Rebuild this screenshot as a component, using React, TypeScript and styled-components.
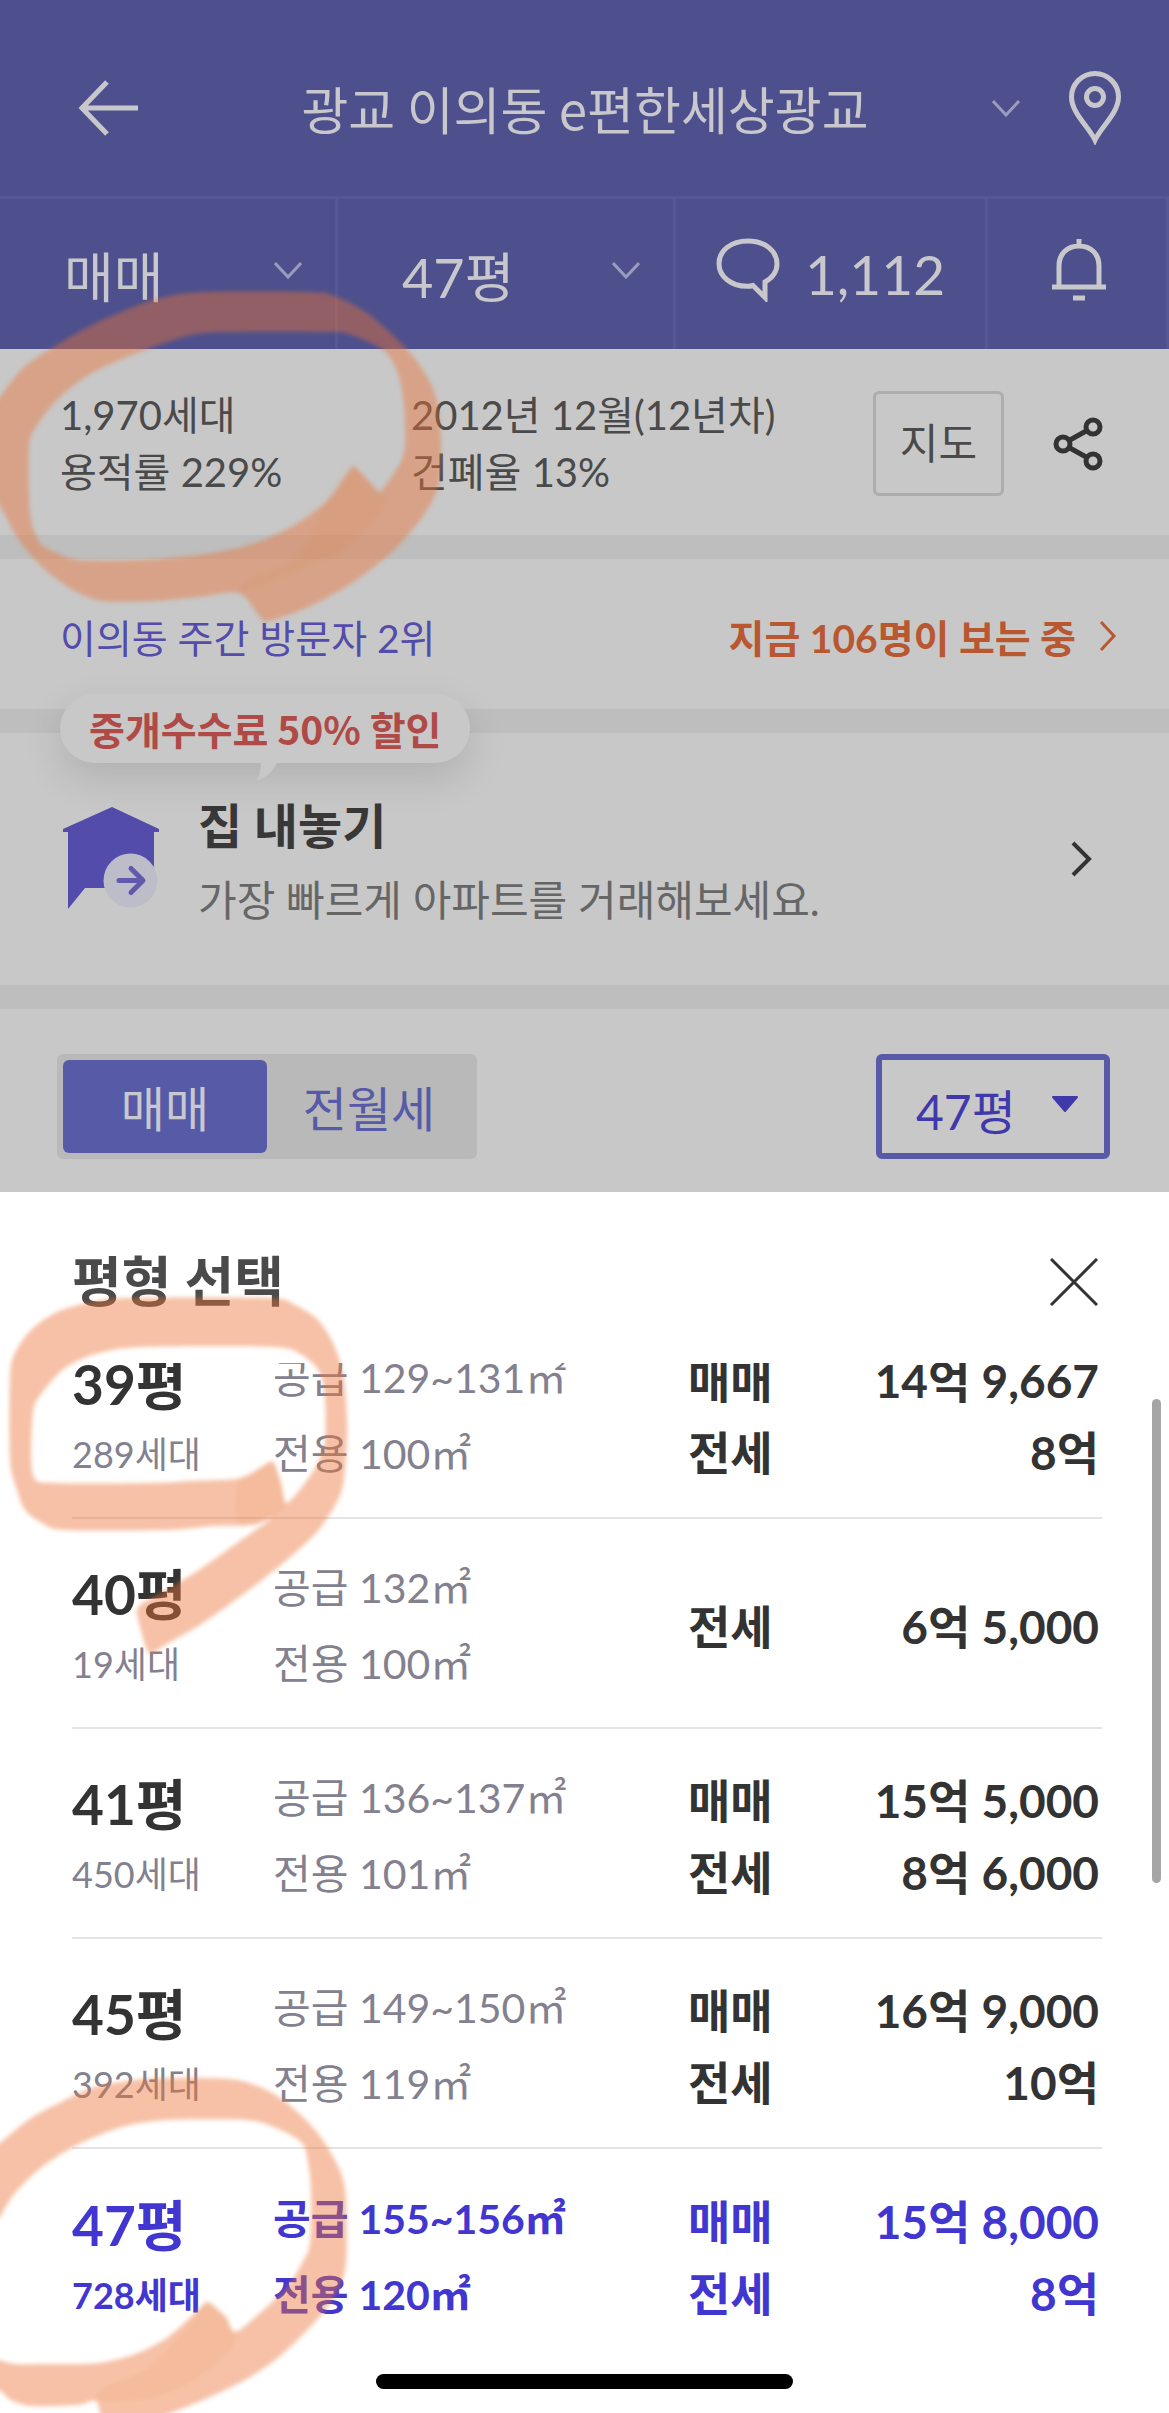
import React from "react";
import styled, { createGlobalStyle } from "styled-components";

const color = {
  header: "#4d508d",
  headerLine: "#555893",
  headerText: "#c8c8cc",
  page: "#c8c8c8",
  band: "#bebebe",
  ink: "#333333",
  body: "#4a4a4a",
  muted: "#666666",
  indigo: "#534caa",
  violet: "#575ba7",
  accent: "#4137d0",
  cool: "#83818f",
};

const GlobalStyle = createGlobalStyle`
  * { box-sizing: border-box; }
  body {
    margin: 0;
    background: #ffffff;
    font-family: Lato, "Noto Sans CJK KR", sans-serif;
    color: ${color.body};
  }
  button, select {
    margin: 0;
    padding: 0;
    border: 0;
    background: none;
    font: inherit;
    color: inherit;
    text-align: left;
    cursor: pointer;
  }
  select { appearance: none; outline: none; }
  svg { display: block; flex: none; }
  h1, h2, p, ul { margin: 0; padding: 0; }
  ul { list-style: none; }
`;

const Page = styled.div`
  position: relative;
  display: flex;
  flex-direction: column;
  min-height: 100vh;
  overflow: hidden;
`;

/* Header */

const Header = styled.header`
  background: ${color.header};
  color: ${color.headerText};
`;

const TitleBar = styled.div`
  display: grid;
  grid-template-columns: 138px 1fr 28px 101px;
  align-items: center;
  height: 199px;
  padding: 20px 48px 0 0;
  border-bottom: 3px solid ${color.headerLine};
`;

const IconButton = styled.button`
  display: flex;
  align-items: center;
  justify-content: flex-end;
`;

const Title = styled.h1`
  padding-left: 40px;
  font-family: "Noto Sans CJK KR", sans-serif;
  font-size: 51px;
  font-weight: 400;
  line-height: 60px;
  text-align: center;
`;

const Filters = styled.div`
  display: grid;
  grid-template-columns: 338fr 338fr 312fr 181fr;
  height: 150px;
`;

const FilterCell = styled.div`
  display: flex;
  align-items: center;
  padding: 0 33px 8px 64px;
  border-right: 3px solid ${color.headerLine};
  font-size: 54px;
`;

const FilterSelect = styled.select`
  flex: 1;
  min-width: 0;
  height: 93px;
  padding-top: 14px;
`;

const TalkButton = styled.button`
  display: flex;
  align-items: center;
  justify-content: center;
  gap: 25px;
  padding-bottom: 8px;
  border-right: 3px solid ${color.headerLine};
  font-size: 55px;

  span {
    padding-top: 8px;
  }
`;

const BellButton = styled.button`
  display: flex;
  align-items: center;
  justify-content: center;
  padding: 0 0 8px 4px;
  border-right: 3px solid ${color.headerLine};
`;

/* Complex summary */

const Band = styled.div`
  height: 24px;
  background: ${color.band};
`;

const Section = styled.section<{ $height: number; $top?: number }>`
  position: relative;
  display: flex;
  align-items: center;
  min-height: ${(p) => p.$height}px;
  padding: ${(p) => p.$top ?? 0}px 66px 0 60px;
  background: ${color.page};
`;

const Facts = styled.p<{ $grow?: boolean }>`
  flex: ${(p) => (p.$grow ? "1" : "0 0 351px")};
  font-size: 40px;
  line-height: 57px;
`;

const MapButton = styled.button`
  width: 131px;
  height: 105px;
  padding-bottom: 6px;
  border: 3px solid #adadad;
  border-radius: 6px;
  font-size: 42px;
  text-align: center;
`;

const ShareButton = styled.button`
  margin-left: 49px;
`;

const Rank = styled.p`
  flex: 1;
  font-size: 39px;
  color: ${color.indigo};
`;

const ViewersLink = styled.a`
  display: flex;
  align-items: center;
  gap: 23px;
  margin-right: -14px;
  font-size: 39px;
  font-weight: 700;
  color: #b85730;
  text-decoration: none;
`;

/* Sell banner */

const Promo = styled.div`
  position: absolute;
  left: 60px;
  top: -39px;
  height: 69px;
  padding: 0 29px;
  border-radius: 35px;
  background: ${color.page};
  box-shadow: 0 15px 40px rgba(0, 0, 0, 0.12);
  font-family: "Noto Sans CJK KR", sans-serif;
  font-size: 39px;
  font-weight: 700;
  line-height: 69px;
  color: #af4a47;

  svg {
    position: absolute;
    left: 196px;
    top: 68px;
  }
`;

const SellLink = styled.a`
  flex: 1;
  display: flex;
  align-items: center;
  padding: 0 11px 0 3px;
  color: inherit;
  text-decoration: none;
`;

const SellText = styled.span`
  flex: 1;
  display: flex;
  flex-direction: column;
  padding: 8px 0 0 38px;
`;

const SellTitle = styled.strong`
  font-size: 48px;
  font-weight: 700;
  line-height: 74px;
  color: #383838;
`;

const SellNote = styled.span`
  font-size: 42px;
  line-height: 74px;
  color: ${color.muted};
`;

/* Trade toggle */

const Toggle = styled.div`
  display: grid;
  grid-template-columns: 204px 204px;
  height: 105px;
  margin-left: -3px;
  padding: 6px;
  border-radius: 6px;
  background: #b9b9b9;
`;

const ToggleButton = styled.button<{ $active?: boolean }>`
  border-radius: 6px;
  padding-bottom: 2px;
  background: ${(p) => (p.$active ? color.violet : "transparent")};
  color: ${(p) => (p.$active ? "#c8c8d0" : color.violet)};
  font-size: 48px;
  text-align: center;
`;

const SizeBox = styled.div`
  display: flex;
  align-items: center;
  width: 234px;
  height: 105px;
  margin-left: auto;
  margin-right: -7px;
  padding: 0 25px 4px 34px;
  border: 6px solid ${color.violet};
  border-radius: 6px;
  color: #4039ab;
  font-size: 48px;
`;

/* Bottom sheet */

const Sheet = styled.section`
  position: relative;
  background: #ffffff;
`;

const SheetHead = styled.div`
  display: flex;
  align-items: center;
  justify-content: space-between;
  height: 171px;
  padding: 8px 71px 0 72px;
`;

const SheetTitle = styled.h2`
  font-size: 54px;
  font-weight: 700;
  line-height: 80px;
`;

const ListViewport = styled.div`
  overflow: hidden;
  padding: 0 67px 0 72px;
`;

const List = styled.ul`
  margin-top: -54px;
`;

const Item = styled.li`
  height: 210px;
  border-bottom: 2px solid #e4e4e6;

  &:last-child {
    height: 209px;
    border-bottom: 0;
  }
`;

const RowButton = styled.button<{ $selected?: boolean }>`
  display: grid;
  grid-template-columns: 201px 1fr 124px 290px;
  align-items: center;
  width: 100%;
  height: 100%;
  color: ${(p) => (p.$selected ? color.accent : color.ink)};
`;

const Column = styled.span<{ $top: number; $end?: boolean }>`
  display: flex;
  flex-direction: column;
  align-items: ${(p) => (p.$end ? "flex-end" : "flex-start")};
  padding-top: ${(p) => p.$top}px;
  white-space: nowrap;
`;

const Pyeong = styled.strong`
  font-size: 55px;
  font-weight: 700;
  line-height: 70px;
`;

const Detail = styled.span<{ $selected?: boolean; $small?: boolean }>`
  font-size: ${(p) => (p.$small ? 36 : 41)}px;
  font-weight: ${(p) => (p.$selected ? 700 : 400)};
  line-height: ${(p) => (p.$small ? 70 : 76)}px;
  color: ${(p) => (p.$selected ? color.accent : color.cool)};
`;

const Price = styled.span`
  padding-right: 3px;
  font-size: 46px;
  font-weight: 700;
  line-height: 72px;
`;

const ScrollThumb = styled.div`
  position: absolute;
  top: 207px;
  right: 8px;
  width: 9px;
  height: 484px;
  border-radius: 5px;
  background: #a5a5a5;
`;

const HomeArea = styled.footer`
  display: flex;
  justify-content: center;
  padding: 16px 0 24px;
  background: #ffffff;
`;

const HomeBar = styled.div`
  width: 417px;
  height: 15px;
  border-radius: 8px;
  background: #000000;
`;

const Marker = styled.svg`
  position: absolute;
  left: 0;
  top: 0;
  width: 1169px;
  height: 2413px;
  pointer-events: none;
`;

/* Icons */

const ChevronDown = () => (
  <svg width="28" height="18" viewBox="0 0 28 18" fill="none" stroke="#9b9cbb" strokeWidth="3">
    <path d="M1 2l13 14L27 2" />
  </svg>
);

const BackIcon = () => (
  <svg width="60" height="56" viewBox="0 0 60 56" fill="none" stroke={color.headerText} strokeWidth="5">
    <path d="M29 2L4 28l25 26M4 28h56" />
  </svg>
);

const PinIcon = () => (
  <svg width="52" height="74" viewBox="0 0 52 74" fill="none" stroke={color.headerText} strokeWidth="5">
    <path d="M26 69C20 56 2.500 42 2.500 26a23.500 23.500 0 0 1 47 0C49.500 42 32 56 26 69z" />
    <circle cx="26" cy="26" r="8.500" />
  </svg>
);

const TalkIcon = () => (
  <svg width="64" height="64" viewBox="0 0 64 64" fill="none" stroke={color.headerText} strokeWidth="5">
    <path d="M49 59.500L37 47.500c-2 .6-4 .8-6 .8C15 48.300 3 38.500 3 25.500S15 3 32 3s29 10 29 23c0 8-5 14-12 18z" />
  </svg>
);

const BellIcon = () => (
  <svg width="54" height="62" viewBox="0 0 54 62" fill="none" stroke={color.headerText} strokeWidth="5">
    <path d="M0 48h54M7 48V27C7 15 15 7 27 7s20 8 20 20v21M27 0v7M21 59h12" />
  </svg>
);

const ShareIcon = () => (
  <svg width="50" height="54" viewBox="0 0 50 54" fill="none" stroke="#333" strokeWidth="5">
    <circle cx="10" cy="27" r="7" />
    <circle cx="40" cy="10" r="7" />
    <circle cx="40" cy="44" r="7" />
    <path d="M16 23.500l18-10M16 30.500l18 10" />
  </svg>
);

const ChevronRight = ({ w, h, stroke, line }: { w: number; h: number; stroke: string; line: number }) => (
  <svg width={w} height={h} viewBox={`0 0 ${w} ${h}`} fill="none" stroke={stroke} strokeWidth={line}>
    <path d={`M2 2L${w - 3} ${h / 2}L2 ${h - 2}`} />
  </svg>
);

const HouseIcon = () => (
  <svg width="97" height="104" viewBox="0 0 97 104">
    <path d="M49 0L96 22v3h-5v56H22L5 102V25H0v-3z" fill={color.indigo} />
    <circle cx="67.500" cy="73.500" r="27" fill="#bdbdc9" />
    <path d="M56 73.500h23M68 61.500l12 12-12 12" fill="none" stroke="#6159ad" strokeWidth="5" strokeLinecap="round" strokeLinejoin="round" />
  </svg>
);

const CloseIcon = () => (
  <svg width="48" height="48" viewBox="0 0 48 48" fill="none" stroke="#333" strokeWidth="3">
    <path d="M1 1l46 46M47 1L1 47" />
  </svg>
);

/* Highlighter strokes: each outline is a list of points joined by a smooth closed curve. */

type Pt = [number, number];

const smooth = (pts: Pt[]) => {
  const n = pts.length;
  const at = (i: number) => pts[(i + n) % n];
  let d = `M${pts[0][0]} ${pts[0][1]}`;
  for (let i = 0; i < n; i++) {
    const [p0, p1, p2, p3] = [at(i - 1), at(i), at(i + 1), at(i + 2)];
    d += `C${p1[0] + (p2[0] - p0[0]) / 7} ${p1[1] + (p2[1] - p0[1]) / 7} ${p2[0] - (p3[0] - p1[0]) / 7} ${
      p2[1] - (p3[1] - p1[1]) / 7
    } ${p2[0]} ${p2[1]}`;
  }
  return d + "Z";
};

const rings: { outer: Pt[]; inner: Pt[]; nib: Pt[] }[] = [
  {
    outer: [
      [-12, 415], [0, 397], [23, 368], [52, 348], [88, 327], [126, 310], [161, 298], [203, 292], [310, 292], [337, 297],
      [367, 313], [398, 340], [421, 367], [436, 397], [441, 440], [439, 483], [425, 513], [394, 550], [352, 583],
      [306, 608], [268, 621], [260, 617], [239, 593], [199, 597], [153, 601], [103, 601], [73, 590], [42, 567],
      [19, 540], [4, 513], [-12, 480],
    ],
    inner: [
      [29, 447], [34, 430], [57, 400], [92, 373], [145, 350], [191, 335], [230, 332], [329, 332], [352, 335],
      [383, 350], [398, 373], [404, 407], [405, 447], [398, 467], [382, 490], [379, 492], [356, 468], [352, 467],
      [343, 480], [325, 503], [291, 527], [249, 545], [199, 555], [138, 560], [80, 560], [57, 553], [40, 543],
      [31, 520], [29, 493],
    ],
    nib: [
      [352, 467], [383, 495], [384, 505], [367, 527], [337, 553], [291, 573], [239, 593], [250, 580], [300, 555],
      [325, 503],
    ],
  },
  {
    outer: [
      [10, 1377], [15, 1353], [31, 1330], [57, 1312], [92, 1302], [130, 1298], [268, 1298], [295, 1305], [318, 1320],
      [333, 1343], [343, 1373], [347, 1417], [346, 1457], [341, 1493], [321, 1527], [295, 1553], [253, 1587],
      [203, 1623], [165, 1645], [153, 1653], [147, 1650], [140, 1627], [137, 1613], [140, 1605], [161, 1593],
      [199, 1570], [237, 1543], [272, 1518], [253, 1525], [214, 1526], [165, 1530], [65, 1530], [42, 1523],
      [25, 1510], [17, 1490], [10, 1460],
    ],
    inner: [
      [33, 1413], [42, 1393], [65, 1368], [99, 1353], [145, 1347], [272, 1347], [302, 1355], [320, 1373], [325, 1400],
      [325, 1440], [318, 1463], [302, 1487], [286, 1503], [281, 1483], [274, 1463], [268, 1463], [241, 1478],
      [191, 1481], [153, 1483], [57, 1483], [33, 1475],
    ],
    nib: [[241, 1478], [268, 1464], [274, 1464], [281, 1483], [286, 1503], [272, 1518], [240, 1524], [236, 1500]],
  },
  {
    outer: [
      [-12, 2155], [0, 2143], [31, 2118], [61, 2102], [92, 2088], [134, 2080], [172, 2078], [230, 2079], [260, 2087],
      [283, 2100], [306, 2120], [325, 2143], [341, 2173], [346, 2200], [346, 2263], [337, 2293], [314, 2323],
      [279, 2357], [245, 2380], [203, 2400], [168, 2414], [150, 2422], [106, 2422], [96, 2401], [77, 2405], [31, 2406],
      [11, 2400], [0, 2390], [-12, 2378],
    ],
    inner: [
      [-14, 2240], [0, 2217], [15, 2193], [42, 2167], [77, 2145], [122, 2127], [168, 2120], [245, 2120], [276, 2128],
      [302, 2143], [308, 2163], [311, 2190], [310, 2243], [302, 2263], [287, 2287], [260, 2313], [235, 2332],
      [226, 2317], [210, 2303], [205, 2303], [195, 2313], [168, 2337], [138, 2353], [99, 2363], [46, 2364],
      [15, 2364], [0, 2360], [-14, 2352],
    ],
    nib: [
      [205, 2304], [210, 2304], [236, 2334], [220, 2358], [190, 2382], [150, 2398], [96, 2401], [110, 2385],
      [150, 2368], [185, 2330],
    ],
  },
];

const MarkerLayer = () => (
  <Marker viewBox="0 0 1169 2413" aria-hidden="true">
    <defs>
      <filter id="soft" x="-5%" y="-5%" width="110%" height="110%">
        <feGaussianBlur stdDeviation="2" />
      </filter>
    </defs>
    <g fill="#eb7132" filter="url(#soft)">
      {rings.map((ring, i) => (
        <g key={i}>
          <path d={smooth(ring.outer) + smooth(ring.inner)} fillRule="evenodd" fillOpacity="0.44" />
          <path d={smooth(ring.nib)} fillOpacity="0.08" />
        </g>
      ))}
    </g>
  </Marker>
);

/* Data */

const sizes = [
  { name: "39평", homes: "289세대", supply: "129~131㎡", net: "100㎡", prices: [["매매", "14억 9,667"], ["전세", "8억"]] },
  { name: "40평", homes: "19세대", supply: "132㎡", net: "100㎡", prices: [["전세", "6억 5,000"]] },
  { name: "41평", homes: "450세대", supply: "136~137㎡", net: "101㎡", prices: [["매매", "15억 5,000"], ["전세", "8억 6,000"]] },
  { name: "45평", homes: "392세대", supply: "149~150㎡", net: "119㎡", prices: [["매매", "16억 9,000"], ["전세", "10억"]] },
  { name: "47평", homes: "728세대", supply: "155~156㎡", net: "120㎡", prices: [["매매", "15억 8,000"], ["전세", "8억"]] },
];

export default function App() {
  return (
    <Page>
      <GlobalStyle />
      <Header>
        <TitleBar>
          <IconButton aria-label="뒤로">
            <BackIcon />
          </IconButton>
          <Title>광교 이의동 e편한세상광교</Title>
          <IconButton aria-label="단지 변경">
            <ChevronDown />
          </IconButton>
          <IconButton aria-label="위치">
            <PinIcon />
          </IconButton>
        </TitleBar>
        <Filters>
          <FilterCell>
            <FilterSelect aria-label="거래 유형">
              <option>매매</option>
            </FilterSelect>
            <ChevronDown />
          </FilterCell>
          <FilterCell>
            <FilterSelect aria-label="평형">
              <option>47평</option>
            </FilterSelect>
            <ChevronDown />
          </FilterCell>
          <TalkButton>
            <TalkIcon />
            <span>1,112</span>
          </TalkButton>
          <BellButton aria-label="알림">
            <BellIcon />
          </BellButton>
        </Filters>
      </Header>

      <Section $height={186} $top={3}>
        <Facts>
          1,970세대
          <br />
          용적률 229%
        </Facts>
        <Facts $grow>
          2012년 12월(12년차)
          <br />
          건폐율 13%
        </Facts>
        <MapButton>지도</MapButton>
        <ShareButton aria-label="공유">
          <ShareIcon />
        </ShareButton>
      </Section>
      <Band />

      <Section $height={150} $top={3}>
        <Rank>이의동 주간 방문자 2위</Rank>
        <ViewersLink href="#viewers">
          지금 106명이 보는 중
          <ChevronRight w={18} h={32} stroke="#b85730" line={3} />
        </ViewersLink>
      </Section>
      <Band />

      <Section $height={252}>
        <Promo>
          중개수수료 50% 할인
          <svg width="21" height="19" viewBox="0 0 21 19">
            <path d="M5 0h16C18 9 10 16 0 19 4 13 5 7 5 0z" fill={color.page} />
          </svg>
        </Promo>
        <SellLink href="#sell">
          <HouseIcon />
          <SellText>
            <SellTitle>집 내놓기</SellTitle>
            <SellNote>가장 빠르게 아파트를 거래해보세요.</SellNote>
          </SellText>
          <ChevronRight w={21} h={36} stroke="#333" line={4} />
        </SellLink>
      </Section>
      <Band />

      <Section $height={183} $top={12}>
        <Toggle>
          <ToggleButton $active>매매</ToggleButton>
          <ToggleButton>전월세</ToggleButton>
        </Toggle>
        <SizeBox>
          <FilterSelect aria-label="평형 필터">
            <option>47평</option>
          </FilterSelect>
          <svg width="28" height="17" viewBox="0 0 28 17">
            <path d="M2 1h24l-12 14z" fill="#4039ab" stroke="#4039ab" strokeWidth="2" strokeLinejoin="round" />
          </svg>
        </SizeBox>
      </Section>

      <Sheet>
        <SheetHead>
          <SheetTitle>평형 선택</SheetTitle>
          <IconButton aria-label="닫기">
            <CloseIcon />
          </IconButton>
        </SheetHead>
        <ListViewport>
          <List>
            {sizes.map((s) => {
              const selected = s.name === "47평";
              return (
                <Item key={s.name}>
                  <RowButton $selected={selected}>
                    <Column $top={12}>
                      <Pyeong>{s.name}</Pyeong>
                      <Detail $small $selected={selected}>{s.homes}</Detail>
                    </Column>
                    <Column $top={6}>
                      <Detail $selected={selected}>공급 {s.supply}</Detail>
                      <Detail $selected={selected}>전용 {s.net}</Detail>
                    </Column>
                    <Column $top={8}>
                      {s.prices.map(([kind]) => (
                        <Price key={kind}>{kind}</Price>
                      ))}
                    </Column>
                    <Column $top={8} $end>
                      {s.prices.map(([kind, value]) => (
                        <Price key={kind}>{value}</Price>
                      ))}
                    </Column>
                  </RowButton>
                </Item>
              );
            })}
          </List>
        </ListViewport>
        <ScrollThumb />
      </Sheet>
      <HomeArea>
        <HomeBar />
      </HomeArea>
      <MarkerLayer />
    </Page>
  );
}
